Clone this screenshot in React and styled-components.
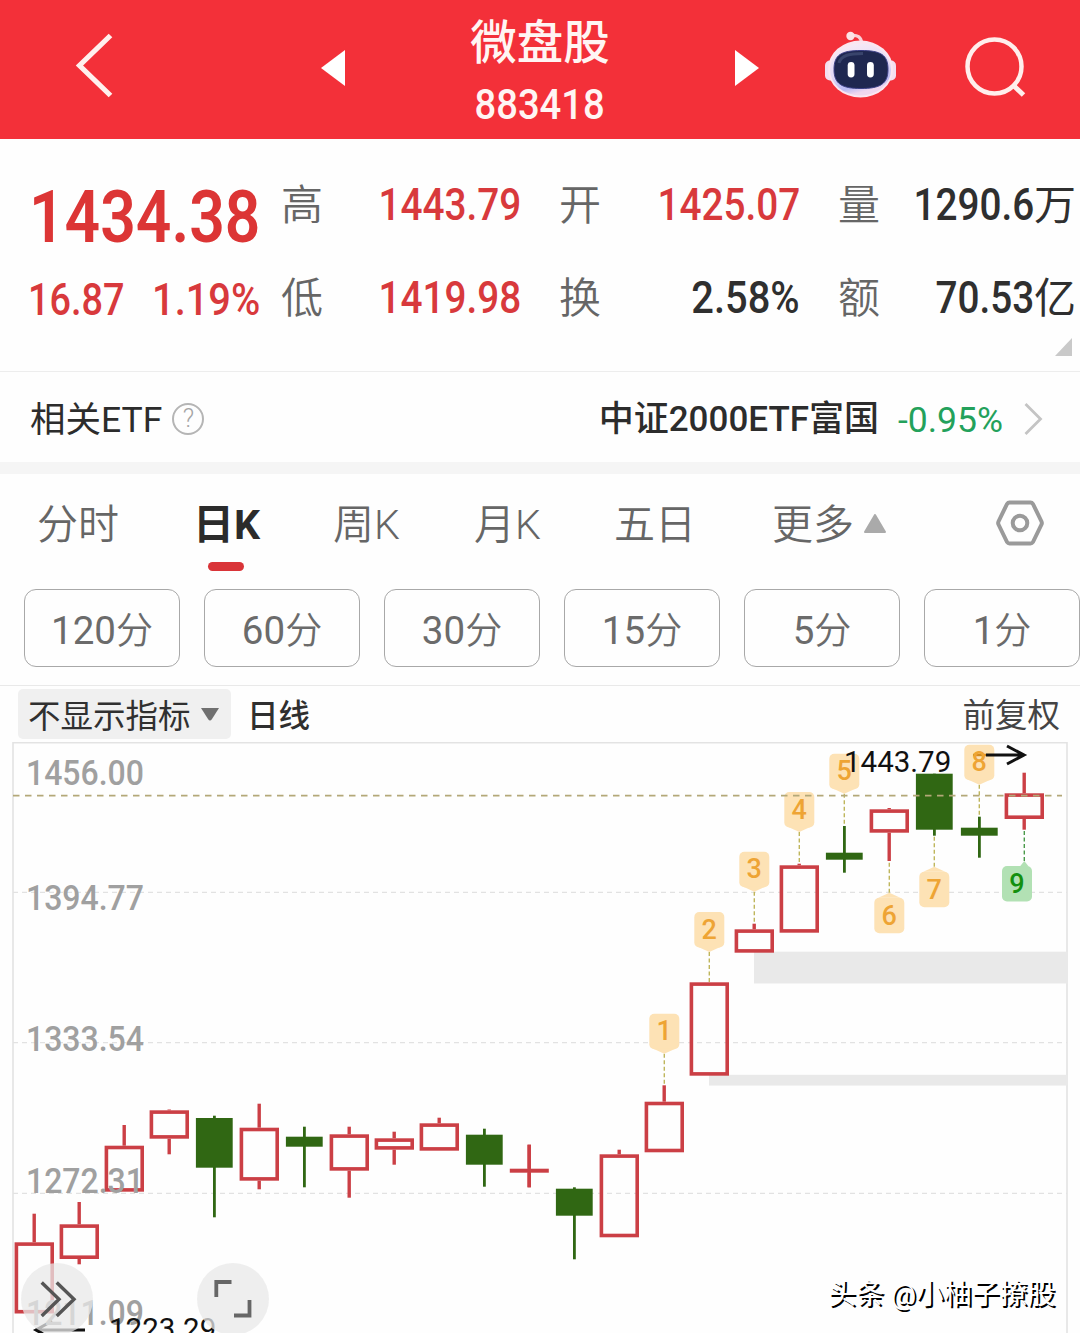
import React from 'react'
import styled, { createGlobalStyle } from 'styled-components'

const GlobalStyle = createGlobalStyle`
  body {
    margin: 0;
    background: #ffffff;
    overflow: hidden;
    font-family: Roboto, 'Noto Sans CJK SC', sans-serif;
  }
`

const Page = styled.div`
  width: 1080px;
  height: 1333px;
  overflow: hidden;
  display: flex;
  flex-direction: column;
  background: #fefefe;
`

const Header = styled.header`
  box-sizing: border-box;
  height: 139px;
  flex: none;
  display: grid;
  grid-template-columns: 300px 70px 340px 70px 115px 1fr;
  background: #f33039;
  color: #fff5f3;
`

const HeaderIcon = styled.svg`
  width: 100%;
  height: 139px;
  display: block;
  overflow: visible;
`

const TitleBlock = styled.div`
  display: flex;
  flex-direction: column;
  align-items: center;
  padding-top: 20px;
`

const Title = styled.h1`
  margin: 0;
  font-size: 46.5px;
  line-height: 46px;
  font-weight: 500;
`

// Figures use a slightly narrowed face
const Figure = styled.span`
  display: inline-block;
  white-space: nowrap;
  line-height: 1;
  font-size: ${(p) => p.$size || 44}px;
  font-weight: ${(p) => p.$weight || 500};
  transform: scaleX(${(p) => p.$narrow || 0.88});
  transform-origin: ${(p) => p.$origin || 'right'} center;
`

const Code = styled.div`
  margin-top: 18px;
  line-height: 41px;
`

const Quote = styled.section`
  box-sizing: border-box;
  height: 233px;
  flex: none;
  display: grid;
  grid-template-columns: 253px 42px 198px 38px 42px 199px 38px 42px 196px;
  grid-template-rows: 93px 93px;
  align-items: center;
  padding: 19px 0 0 28px;
  position: relative;
  border-bottom: 1px solid #ededed;
  color: #2f2f2f;
`

const Price = styled.div`
  color: #dc3535;
  padding: 28px 0 0 1px;
`

const Change = styled.div`
  display: flex;
  color: #d8393c;
  padding-top: 4px;
`

const ChangeValue = styled.div`
  width: 124px;
`

const QuoteLabel = styled.div`
  font-size: 42px;
  line-height: 42px;
  padding-top: 3px;
  color: #666;
  font-weight: 350;
`

const QuoteValue = styled.div`
  display: flex;
  align-items: center;
  justify-content: flex-end;
  color: ${(p) => (p.$rise ? '#d8393c' : '#2f2f2f')};
`

const Unit = styled.span`
  font-size: 42px;
  line-height: 42px;
  padding-top: 2px;
  font-weight: 400;
`

const Spacer = styled.div``

const Corner = styled.svg`
  position: absolute;
  right: 8px;
  bottom: 15px;
  width: 17px;
  height: 18px;
`

const EtfRow = styled.section`
  box-sizing: border-box;
  height: 102px;
  flex: none;
  display: flex;
  align-items: center;
  padding: 3px 37px 0 30px;
  border-bottom: 12px solid #f5f5f5;
  font-size: 35.5px;
  line-height: 36px;
  color: #2c2c2c;
`

const EtfLabel = styled.span`
  padding-top: 3px;
`

const Help = styled.span`
  box-sizing: border-box;
  width: 32px;
  height: 32px;
  margin-left: 10px;
  border: 2px solid #b5b5b5;
  border-radius: 50%;
  font-size: 25px;
  line-height: 28px;
  text-align: center;
  color: #a5a5a5;
  font-weight: 300;
`

const EtfName = styled.span`
  margin-left: auto;
  padding-top: 3px;
  font-size: 35px;
  font-weight: 500;
`

const EtfChange = styled.span`
  margin-left: 19px;
  padding-top: 3px;
  width: 106px;
  color: #23a15b;
`

const Chevron = styled.svg`
  width: 19px;
  height: 34px;
  margin-left: 20px;
`

const Tabs = styled.nav`
  height: 115px;
  flex: none;
  display: grid;
  grid-template-columns: 156px 140px 141px 140px 158px 224px 48px;
  padding-left: 37px;
  align-items: start;
`

const Tab = styled.div`
  display: flex;
  align-items: center;
  gap: 10px;
  padding-top: 29px;
  font-size: 41px;
  line-height: 44px;
  color: ${(p) => (p.$active ? '#2b2b2b' : '#666')};
  font-weight: ${(p) => (p.$active ? 700 : 350)};
  position: relative;

  &::after {
    content: '';
    display: ${(p) => (p.$active ? 'block' : 'none')};
    position: absolute;
    left: 15px;
    top: 88px;
    width: 36px;
    height: 9px;
    border-radius: 5px;
    background: #d93438;
  }

  svg {
    margin-top: -3px;
  }
`

const TabIcon = styled.svg`
  width: 48px;
  height: 48px;
  margin-top: 25px;
`

const Periods = styled.div`
  box-sizing: border-box;
  height: 97px;
  flex: none;
  display: flex;
  gap: 24px;
  padding-left: 24px;
  border-bottom: 1px solid #e9e9e9;
`

const Period = styled.button`
  box-sizing: border-box;
  width: 156px;
  height: 78px;
  flex: none;
  padding: 0 0 1px;
  border: 1px solid #a8a8a8;
  border-radius: 12px;
  background: #fefefe;
  color: #6b6b6b;
  font-family: inherit;
  font-size: 38.5px;
  font-weight: 400;

  span {
    font-size: 37px;
    font-weight: 350;
  }
`

const IndicatorBar = styled.div`
  height: 56px;
  flex: none;
  display: flex;
  align-items: flex-start;
  padding: 3px 20px 0 18px;
  box-sizing: border-box;
  font-size: 32.5px;
  line-height: 55px;
  color: #444;
`

const IndicatorSelect = styled.div`
  box-sizing: border-box;
  width: 213px;
  height: 50px;
  display: flex;
  align-items: center;
  gap: 10px;
  padding-left: 10px;
  border-radius: 5px;
  background: #f0f0f0;
  color: #303030;

  span {
    padding-top: 6px;
  }
`

const LineName = styled.div`
  margin-left: 16px;
  font-size: 31.5px;
  font-weight: 500;
  color: #2f2f2f;
`

const Adjust = styled.div`
  margin-left: auto;
`

const ChartArea = styled.div`
  position: relative;
  flex: none;
  height: 591px;
`

const ChartSvg = styled.svg`
  display: block;
  width: 1080px;
  height: 591px;
`

const RoundButton = styled.div`
  position: absolute;
  left: ${(p) => p.$left}px;
  top: 521px;
  width: 72px;
  height: 72px;
  border-radius: 50%;
  background: rgba(232, 232, 232, 0.75);

  svg {
    display: block;
    width: 72px;
    height: 72px;
  }
`

const Watermark = styled.div`
  position: absolute;
  left: 828px;
  top: 535px;
  font-size: 27.9px;
  line-height: 36px;
  white-space: nowrap;
  color: #fff;
  text-shadow: 2px 2px 0 #000;
`

const quotes = [
  [
    { label: '高', value: '1443.79', rise: true },
    { label: '开', value: '1425.07', rise: true },
    { label: '量', value: '1290.6', unit: '万' },
  ],
  [
    { label: '低', value: '1419.98', rise: true },
    { label: '换', value: '2.58%', narrow: 0.905 },
    { label: '额', value: '70.53', unit: '亿' },
  ],
]

const periods = ['120', '60', '30', '15', '5', '1']

// [high, body top, body bottom, low, falling]
const candles = [
  [1213.7, 1242.3, 1313.5, 1313.5],
  [1202, 1224.3, 1259, 1264.3],
  [1125, 1145.7, 1191.7, 1191.7],
  [1109.5, 1110.3, 1138.7, 1154.3],
  [1115.7, 1118, 1167.7, 1217.3, true],
  [1103.7, 1127.7, 1180.7, 1189.3],
  [1126.7, 1136.7, 1146.7, 1187.3, true],
  [1126.7, 1134.3, 1170.7, 1197.7],
  [1131.7, 1138.3, 1149.7, 1164.7],
  [1117.7, 1123.3, 1150.7, 1150.7],
  [1128.7, 1134.7, 1164.7, 1186.7, true],
  [1144.7, 1168.7, 1172.7, 1187.3],
  [1187.3, 1188.7, 1215.7, 1259.3, true],
  [1149.7, 1154.3, 1237.3, 1237.3],
  [1085.3, 1101.7, 1152.3, 1152.3],
  [982.3, 982.3, 1075.7, 1075.7],
  [923.7, 929.3, 952.7, 952.7],
  [863.7, 865.3, 932.7, 932.7],
  [826, 852.7, 859.7, 872.7, true],
  [808, 809.3, 832.7, 861],
  [773.7, 773.7, 829.7, 835.7, true],
  [816.7, 827.7, 835.7, 857.7, true],
  [772.7, 793.3, 819, 829.7],
]

// y is the top of the tag box, to is where its dashed line ends
const tags = [
  { n: 1, x: 664.3, y: 1013.7, to: 1085 },
  { n: 2, x: 709.3, y: 912, to: 982 },
  { n: 3, x: 754.3, y: 851.7, to: 924 },
  { n: 4, x: 799.3, y: 792, to: 864 },
  { n: 5, x: 844.3, y: 753.7, to: 826 },
  { n: 6, x: 889.3, y: 897.7, to: 861, below: true },
  { n: 7, x: 934.3, y: 871.7, to: 836, below: true },
  { n: 8, x: 979.3, y: 744.7, to: 817 },
  { n: 9, x: 1017, y: 866, to: 830, below: true, tip: 1024.3, green: true },
]

const labels = [
  ['1456.00', 784.5],
  ['1394.77', 909.5],
  ['1333.54', 1051],
  ['1272.31', 1192.5],
  ['1211.09', 1325],
]

function Candle({ x, data }) {
  const [high, top, bottom, low, falling] = data
  const color = falling ? '#306713' : '#cb3f45'
  if (falling) {
    return (
      <g fill={color}>
        <rect x={x - 1.3} y={high} width="2.8" height={low - high} />
        <rect x={x - 18.4} y={top} width="36.8" height={bottom - top} />
      </g>
    )
  }
  const height = bottom - top
  return (
    <g fill={color}>
      <rect x={x - 1.8} y={high} width="3.4" height={top - high} />
      <rect x={x - 1.8} y={bottom} width="3.4" height={low - bottom} />
      {height < 5 ? (
        <>
          <rect x={x - 19.5} y={top} width="39" height={height} />
          <rect x={x - 1.8} y={high} width="3.4" height={low - high} />
        </>
      ) : (
        <rect
          x={x - 17.9}
          y={top + 1.8}
          width="35.8"
          height={height - 3.6}
          fill="none"
          stroke={color}
          strokeWidth="3.6"
        />
      )}
    </g>
  )
}

function TagShape({ tag }) {
  const tip = tag.tip || tag.x
  const edge = tag.below ? tag.y : tag.y + 35
  const point = tag.below ? edge - 5 : edge + 5
  return (
    <g>
      <line
        x1={tip}
        x2={tip}
        y1={point}
        y2={tag.to}
        stroke={tag.green ? '#4a9a4a' : '#bfb65c'}
        strokeWidth="1.4"
        strokeDasharray="4 2.5"
      />
      <g fill={tag.green ? '#b2e1b4' : '#fde2b5'}>
        <rect x={tag.x - 15} y={tag.y} width="30" height="35.5" rx="5" />
        <path
          d={
            tag.green
              ? `M${tip - 4} ${edge}L${tip} ${point}L${tip + 4} ${edge}Z`
              : `M${tip - 11} ${edge}L${tip} ${point}L${tip + 11} ${edge}Z`
          }
        />
      </g>
    </g>
  )
}

function Chart() {
  return (
    <ChartSvg viewBox="0 742 1080 591">
      <g stroke="#e2e2e2" strokeWidth="1.3" strokeDasharray="5 4">
        <line x1="13" x2="1067" y1="892.3" y2="892.3" />
        <line x1="13" x2="1067" y1="1042.6" y2="1042.6" />
        <line x1="13" x2="1067" y1="1193.3" y2="1193.3" />
      </g>
      <path d="M13 1333V742.8H1067V1333" fill="none" stroke="#e3e3e3" strokeWidth="1.6" />
      <rect x="754" y="951.7" width="313.5" height="31.8" fill="#e9e9e9" />
      <rect x="709" y="1074.8" width="358.5" height="10.8" fill="#e9e9e9" />
      {candles.map((data, i) => (
        <Candle key={i} x={34.3 + i * 45} data={data} />
      ))}
      {tags.map((tag) => (
        <TagShape key={tag.n} tag={tag} />
      ))}
      <line x1="13" x2="1062" y1="795.7" y2="795.7" stroke="#b3a878" strokeWidth="1.8" strokeDasharray="6.5 5.5" />
      <g fill="none" stroke="#111" strokeWidth="3">
        <path d="M986 755H1024M1007 746L1024 755L1007 764" />
        <path d="M85 1330H36M52 1321L36 1330L52 1339" />
      </g>
      <path d="M973 755H986" stroke="#d08a20" strokeWidth="2.4" />
      <g fontFamily="Roboto, sans-serif" fontSize="27" fontWeight="500" textAnchor="middle">
        {tags.map((tag) => (
          <text key={tag.n} x={tag.x} y={tag.y + (tag.below ? 27 : 26.5)} fill={tag.green ? '#13900f' : '#eea434'}>
            {tag.n}
          </text>
        ))}
      </g>
      <g fontFamily="Roboto, sans-serif" fontSize="34.5" fontWeight="500" fill="#a0a0a0">
        {labels.map(([text, y]) => (
          <text key={text} x="26" y={y} textLength="118" lengthAdjust="spacingAndGlyphs">
            {text}
          </text>
        ))}
      </g>
      <g fontFamily="Roboto, sans-serif" fontSize="29.5" fill="#111">
        <text x="844" y="772.3">1443.79</text>
        <text x="109" y="1339">1223.29</text>
      </g>
    </ChartSvg>
  )
}

function Robot() {
  return (
    <HeaderIcon viewBox="780 0 115 139">
      <defs>
        <linearGradient id="shell" x1="0" y1="0" x2="0.3" y2="1">
          <stop offset="0" stopColor="#fbeef5" />
          <stop offset="0.6" stopColor="#e3d9f7" />
          <stop offset="0.88" stopColor="#b9baf3" />
          <stop offset="1" stopColor="#f0d7ee" />
        </linearGradient>
      </defs>
      <path d="M851 35.5C857 34.500 861.500 37 861.500 43" fill="none" stroke="#fbd0d6" strokeWidth="3.200" />
      <circle cx="850.500" cy="36" r="4.200" fill="#fce3e6" />
      <rect x="825" y="60.500" width="14" height="20" rx="5" fill="#f3dff0" />
      <rect x="882" y="60.500" width="14" height="20" rx="5" fill="#f3dff0" />
      <ellipse cx="860.500" cy="69" rx="32.500" ry="28.500" fill="#fbe6f0" />
      <ellipse cx="860.500" cy="69.500" rx="30.500" ry="26" fill="url(#shell)" />
      <path
        d="M861 50.500C881 50.500 888 55 888 69.500C888 84 880 88.500 861 88.500C842 88.500 834 84 834 69.500C834 55 841 50.500 861 50.500Z"
        fill="#1f2750"
        stroke="#3b3f86"
      />
      <path d="M839 63C841 55 850 53.500 863 53.500" fill="none" stroke="#39446c" strokeWidth="3" />
      <rect x="847.700" y="62" width="6.800" height="15.500" rx="3.400" fill="#fff" />
      <rect x="867" y="62" width="6.800" height="15.500" rx="3.400" fill="#fff" />
    </HeaderIcon>
  )
}

const App = () => (
  <Page>
    <GlobalStyle />
    <Header>
      <HeaderIcon viewBox="0 0 300 139">
        <path d="M110.500 35.500L79.500 65.500L110.500 95.500" fill="none" stroke="#fff0ee" strokeWidth="5.200" />
      </HeaderIcon>
      <HeaderIcon viewBox="300 0 70 139">
        <path d="M321 68L345 50V86Z" fill="#fff" />
      </HeaderIcon>
      <TitleBlock>
        <Title>微盘股</Title>
        <Code>
          <Figure $size={42} $narrow={0.91} $origin="center">
            883418
          </Figure>
        </Code>
      </TitleBlock>
      <HeaderIcon viewBox="710 0 70 139">
        <path d="M759 68L735 50V86Z" fill="#fff" />
      </HeaderIcon>
      <Robot />
      <HeaderIcon viewBox="895 0 185 139">
        <g fill="none" stroke="#ffeeec" strokeWidth="4.500">
          <circle cx="994.500" cy="66.500" r="27" />
          <path d="M1012.500 84.500L1023.500 95" strokeWidth="5" />
        </g>
      </HeaderIcon>
    </Header>

    <Quote>
      {quotes.map((row, i) => (
        <React.Fragment key={i}>
          {i === 0 ? (
            <Price>
              <Figure $size={72.5} $narrow={0.86} $weight={600} $origin="left">
                1434.38
              </Figure>
            </Price>
          ) : (
            <Change>
              <ChangeValue>
                <Figure $narrow={0.86} $origin="left">
                  16.87
                </Figure>
              </ChangeValue>
              <Figure $narrow={0.905} $origin="left">
                1.19%
              </Figure>
            </Change>
          )}
          {row.map((item, j) => (
            <React.Fragment key={item.label}>
              {j > 0 && <Spacer />}
              <QuoteLabel>{item.label}</QuoteLabel>
              <QuoteValue $rise={item.rise}>
                <Figure $narrow={item.narrow}>{item.value}</Figure>
                {item.unit && <Unit>{item.unit}</Unit>}
              </QuoteValue>
            </React.Fragment>
          ))}
        </React.Fragment>
      ))}
      <Corner viewBox="0 0 17 18">
        <path d="M17 0V18H0Z" fill="#c9c9c9" />
      </Corner>
    </Quote>

    <EtfRow>
      <EtfLabel>相关ETF</EtfLabel>
      <Help>?</Help>
      <EtfName>中证2000ETF富国</EtfName>
      <EtfChange>-0.95%</EtfChange>
      <Chevron viewBox="0 0 19 34">
        <path d="M1.500 2L16.500 17L1.500 32" fill="none" stroke="#c4c4c4" strokeWidth="2.800" />
      </Chevron>
    </EtfRow>

    <Tabs>
      <Tab>分时</Tab>
      <Tab $active>日K</Tab>
      <Tab>周K</Tab>
      <Tab>月K</Tab>
      <Tab>五日</Tab>
      <Tab>
        更多
        <svg width="22" height="19" viewBox="0 0 22 19">
          <path d="M11 1L21 18H1Z" fill="#aaa" stroke="#aaa" strokeLinejoin="round" strokeWidth="2" />
        </svg>
      </Tab>
      <TabIcon viewBox="0 0 48 48">
        <g fill="none" stroke="#9a9a9a" strokeWidth="4" strokeLinejoin="round">
          <path d="M13.500 3.500H34.500Q36 3.500 37 5L45.500 22.500Q46.200 24 45.500 25.500L37 43Q36 44.500 34.500 44.500H13.500Q12 44.500 11 43L2.500 25.500Q1.800 24 2.500 22.500L11 5Q12 3.500 13.500 3.500Z" />
          <circle cx="24" cy="24" r="7.300" />
        </g>
      </TabIcon>
    </Tabs>

    <Periods>
      {periods.map((n) => (
        <Period key={n}>
          {n}
          <span>分</span>
        </Period>
      ))}
    </Periods>

    <IndicatorBar>
      <IndicatorSelect>
        <span>不显示指标</span>
        <svg width="18" height="13" viewBox="0 0 18 13">
          <path d="M0 0H18L11 11Q9 14 7 11Z" fill="#707070" />
        </svg>
      </IndicatorSelect>
      <LineName>日线</LineName>
      <Adjust>前复权</Adjust>
    </IndicatorBar>

    <ChartArea>
      <Chart />
      <RoundButton $left={21}>
        <svg viewBox="21 1263 72 72">
          <path
            d="M41.700 1282.500L59 1299.300L41.700 1316M56.700 1282.500L74 1299.300L56.700 1316"
            fill="none"
            stroke="#555"
            strokeWidth="3.400"
          />
        </svg>
      </RoundButton>
      <RoundButton $left={197}>
        <svg viewBox="197 1263 72 72">
          <path
            d="M216.300 1297V1282H231.500M249.500 1300V1315.500H234"
            fill="none"
            stroke="#666"
            strokeWidth="3.800"
          />
        </svg>
      </RoundButton>
      <Watermark>头条 @小柚子撩股</Watermark>
    </ChartArea>
  </Page>
)

export default App
